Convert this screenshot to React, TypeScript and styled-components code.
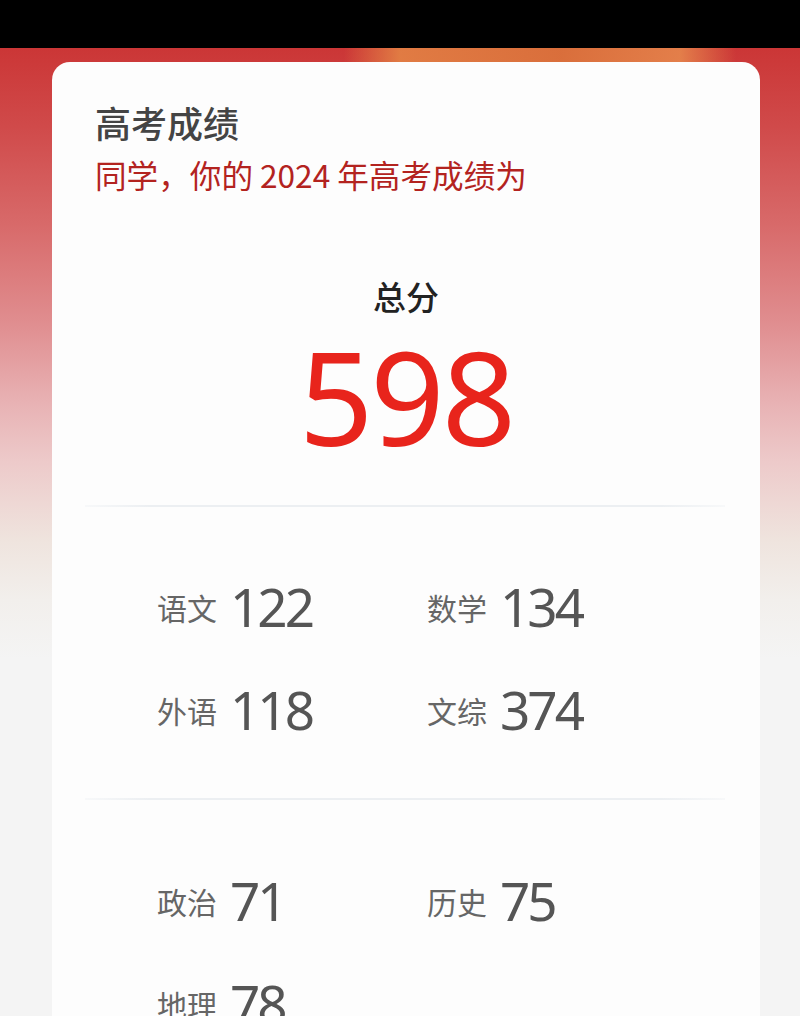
import React from "react";
import styled, { createGlobalStyle } from "styled-components";

const GlobalStyle = createGlobalStyle`
  html, body { margin: 0; padding: 0; }
  body {
    width: 800px;
    height: 1016px;
    overflow: hidden;
    background: #f4f4f4;
    font-family: "Noto Sans CJK SC", "Noto Sans", sans-serif;
  }
`;

const Page = styled.div`
  width: 800px;
  height: 1016px;
  display: flex;
  flex-direction: column;
  overflow: hidden;
`;

const StatusBar = styled.div`
  height: 48px;
  flex: none;
  background: #000;
`;

const Stage = styled.div`
  flex: 1;
  display: flex;
  flex-direction: column;
  padding: 14px 40px 0 52px;
  background:
    linear-gradient(90deg, rgba(0,0,0,0) 0%, rgba(0,0,0,0) 43%, rgba(230,140,70,0.8) 50%, rgba(220,120,60,0.85) 70%, rgba(235,150,80,0.75) 85%, rgba(0,0,0,0) 92%) top / 100% 14px no-repeat,
    linear-gradient(180deg, #cb3636 0%, #d04a4a 8%, #d86a6a 18%, #e08e90 28%, #e8b2b4 36%, #edcaca 42%, #efe4de 50%, #f2efec 56%, #f4f4f4 62%, #f4f4f4 100%);
`;

const Card = styled.div`
  flex: 1;
  background: #fdfdfd;
  border-radius: 18px 18px 0 0;
  padding: 38px 0 0 0;
  display: flex;
  flex-direction: column;
`;

const Header = styled.div`
  padding: 0 43px;
  display: flex;
  flex-direction: column;
  gap: 10px;
`;

const Title = styled.div`
  font-size: 36px;
  line-height: 44px;
  color: #444;
  font-weight: 500;
`;

const Subtitle = styled.div`
  font-size: 31.6px;
  line-height: 40px;
  color: #b3231f;
  white-space: pre;
`;

const Total = styled.div`
  margin-top: 82px;
  display: flex;
  flex-direction: column;
  align-items: center;
`;

const TotalLabel = styled.div`
  font-size: 33px;
  line-height: 40px;
  color: #222;
  font-weight: 500;
`;

const TotalValue = styled.div`
  margin-top: 15px;
  font-family: "Noto Sans", "Noto Sans CJK SC", sans-serif;
  font-size: 130px;
  line-height: 130px;
  color: #e8241c;
  letter-spacing: -3px;
`;

const Divider = styled.div<{ $top: number }>`
  height: 2px;
  margin: ${(p) => p.$top}px 35px 0 33px;
  background: linear-gradient(90deg, rgba(238,241,244,0.4), #eceff2 10%, #eceff2 90%, rgba(238,241,244,0.4));
`;

const Grid = styled.div<{ $top: number }>`
  margin-top: ${(p) => p.$top}px;
  padding-left: 105px;
  display: grid;
  grid-template-columns: 270px 270px;
  row-gap: 43px;
`;

const Item = styled.div`
  display: flex;
  align-items: center;
  gap: 13px;
  height: 60px;
`;

const Label = styled.span`
  font-size: 30px;
  color: #666;
  line-height: 60px;
`;

const Value = styled.span`
  font-family: "Noto Sans", "Noto Sans CJK SC", sans-serif;
  font-size: 53px;
  line-height: 60px;
  color: #555;
  letter-spacing: -3px;
`;

const main = [
  ["语文", "122"],
  ["数学", "134"],
  ["外语", "118"],
  ["文综", "374"],
];

const sub = [
  ["政治", "71"],
  ["历史", "75"],
  ["地理", "78"],
];

export default function App() {
  return (
    <>
      <GlobalStyle />
      <Page>
        <StatusBar />
        <Stage>
          <Card>
            <Header>
              <Title>高考成绩</Title>
              <Subtitle>同学，你的 2024 年高考成绩为</Subtitle>
            </Header>
            <Total>
              <TotalLabel>总分</TotalLabel>
              <TotalValue>598</TotalValue>
            </Total>
            <Divider $top={44} />
            <Grid $top={70}>
              {main.map(([k, v]) => (
                <Item key={k}>
                  <Label>{k}</Label>
                  <Value>{v}</Value>
                </Item>
              ))}
            </Grid>
            <Divider $top={58} />
            <Grid $top={71}>
              {sub.map(([k, v]) => (
                <Item key={k}>
                  <Label>{k}</Label>
                  <Value>{v}</Value>
                </Item>
              ))}
            </Grid>
          </Card>
        </Stage>
      </Page>
    </>
  );
}
